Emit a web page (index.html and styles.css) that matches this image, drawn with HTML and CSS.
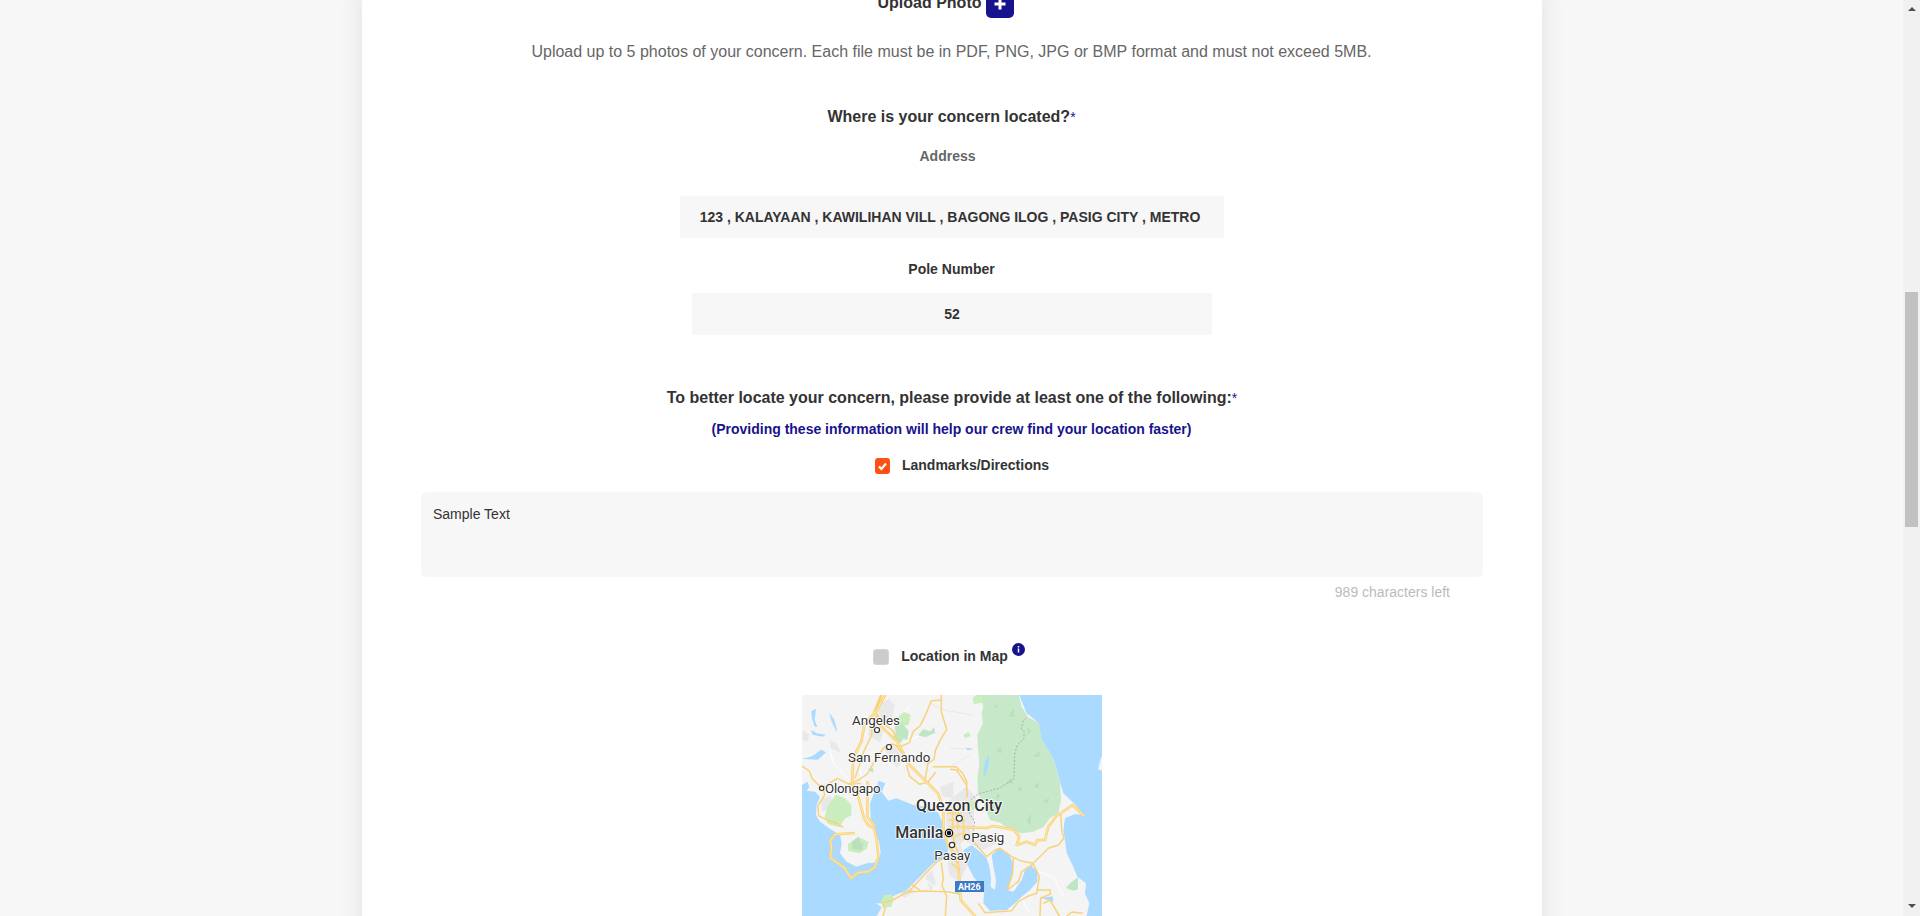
FILE: index.html
```html
<!DOCTYPE html>
<html lang="en">
<head>
<meta charset="utf-8">
<title>Report a Concern</title>
<link rel="stylesheet" href="styles.css">
</head>
<body>
<div class="page">
  <main class="card">
    <div class="upload"><span class="upload-label">Upload Photo</span><button class="add" aria-label="Add photo"><svg width="28" height="28" viewBox="0 0 28 28"><path d="M14 8.5v11M8.5 14h11" stroke="#fff" stroke-width="3" fill="none"/></svg></button></div>
    <p class="hint">Upload up to 5 photos of your concern. Each file must be in PDF, PNG, JPG or BMP format and must not exceed 5MB.</p>
    <h2 class="question where">Where is your concern located?<span class="req">*</span></h2>
    <div class="label address-label">Address</div>
    <div class="field address">123 , KALAYAAN , KAWILIHAN VILL , BAGONG ILOG , PASIG CITY , METRO</div>
    <div class="label pole-label">Pole Number</div>
    <div class="field pole">52</div>
    <h2 class="question better">To better locate your concern, please provide at least one of the following:<span class="req">*</span></h2>
    <div class="label note">(Providing these information will help our crew find your location faster)</div>
    <div class="option landmarks"><span class="box on"><svg width="15" height="16" viewBox="0 0 15 16"><path d="M4 8.4l2.4 2.5 4.6-5.4" stroke="#fff" stroke-width="2.2" fill="none"/></svg></span><span class="label">Landmarks/Directions</span></div>
    <div class="textarea">Sample Text</div>
    <div class="count">989 characters left</div>
    <div class="option location"><span class="box"></span><span class="label">Location in Map</span><span class="info"><svg width="13" height="13" viewBox="0 0 13 13"><circle cx="6.5" cy="6.5" r="6.5" fill="#17138c"/><path d="M6.5 3v1.6M6.5 5.4v4.2" stroke="#fff" stroke-width="1.5" fill="none"/></svg></span></div>
    <svg class="map" width="300" height="221" viewBox="6 15 900 663">
      <rect x="6" y="15" width="900" height="663" fill="#f4f4f4"/>
      <!-- terrain shading -->
      <g fill="#e8e8e8">
        <path d="M230 50l36-24 18 20-10 42-30 0zM210 100l40 20-10 38-36-22zM250 175l34-6 28 40-22 24zM90 150l20 10 12 28-30-14zM8 120l20 14-6 22-16-8zM420 290l40-14v50l-34-8zM438 340l60-50 30 30-10 90-40 60-38-30zM440 490l42-24 20 60-24 50-30-20zM376 560l20-20 12 40-18 24zM290 600l34-16 20 20-30 20z"/>
        <path d="M62 330l30-14 10 30-36 20zM500 420l50 10 40 30-40 20-50-24z"/>
      </g>
      <!-- minor roads -->
      <g fill="none" stroke="#fff" stroke-width="3">
        <path d="M90 180l10 40 50 52M180 240l20 60M260 120l70-70M310 160l60-30M330 410l20-40M380 570l30 30 50 14M640 580l50 90M700 540l60 20 30 60"/>
      </g>
      <path d="M392 40l40 20 90 16M352 202l28 22M450 176h60M450 230l60-35" fill="none" stroke="#e4e4e4" stroke-width="2"/>
      <!-- sea, bays and lake -->
      <g fill="#aadaff">
        <path d="M6 285L22 275L28 290L20 302L45 305L60 320L50 345L48 375L60 395L95 420L120 435L125 460L120 490L140 515L170 530L200 520L232 517L242 490L238 460L225 420L212 385L210 340L222 310L230 292L236 272L256 280L245 305L265 332L290 325L340 345L380 350L415 368L428 400L432 440L445 480L440 505L400 520L370 550L320 600L272 622L248 640L228 640L245 652L230 678H6z"/>
        <path d="M658 15L680 70L712 95L725 150L750 190L765 220L778 270L790 310L822 340L852 375L825 372L795 385L790 420L795 450L800 490L820 530L832 560L858 580L855 610L868 640L860 678H906V242L894 238L904 200H906V15z"/>
        <path d="M490 480L515 465L540 485L560 505L568 530L573 565L572 590L585 600L588 570L580 530L575 495L595 475L625 490L640 520L635 560L622 600L640 605L665 570L675 540L695 528L712 545L712 575L690 600L665 620L645 640L620 660L570 662L550 640L553 600L520 560L500 520z"/>
        <path d="M34 64l14-8-4 34 8 20-8 0-8-24zM6 207l30-8 28-20 14 8-24 22zM34 120l16 10 28 4-10 6-30-6zM88 68l14 20 10 34-4 0-14-30zM555 210l10-14 0 34-10 28-4-10zM498 173l24 4-20 4zM724 624l34-5 2 16-16-4z"/>
      </g>
      <!-- forests and parks -->
      <path d="M542 15H656L665 50L685 82L718 100L725 150L750 190L765 220L780 280L783 330L775 370L750 385L730 412L700 425L665 430L635 422L600 398L570 390L562 370L550 340L534 310L532 270L538 220L534 170L532 135L549 100L545 70L550 50z" fill="#c8e8ca"/>
      <path d="M556 212l10-18 0 34-12 30-4-6z" fill="#aadaff"/>
      <g fill="#caedbd">
        <path d="M82 348l26-34 26 10 20 20 0 32-20 10-16 26-34-10-10-20zM144 462l30-22 32 16-6 20-22 14-34-8zM290 84l22-18 20 8-6 32-30 2zM518 24l12-10 16 2v22l-24 4zM490 134l16-8 6 12-16 6zM252 616l20-4 10 12-8 26-22 4-10-18zM504 342l20-12 2 26-18 4z"/>
      </g>
      <g fill="#bfe6c4">
        <path d="M284 110l22-10 20 22-4 28-34-12zM354 136l16-18 22 6 10-14 4 18-30 14zM204 236l16-2 0 14-12-6zM798 594l12-14 24-18v36l-14 4zM280 136l30 10-8 12-26-10zM464 608l18-10 0 20z"/>
      </g>
      <g fill="#b9dfbd">
        <path d="M626 80l14-26 4 26zM682 110l12 14-10 10zM700 290l16-14 0 20zM680 394l12-24 0 38zM620 280l12-18 10 20zM560 362l20-14 4 16zM592 310l12 8-16 10zM728 334l20-10-4 16zM590 180l16-8-4 20zM700 200l18-16 0 16zM650 300l14-12 2 14zM581 50l8-8 2 14zM156 456l20-14 6 16 10 2-8 22-26-6z"/>
      </g>
      <!-- boundary -->
      <path d="M678 84l-8 8-6 24 8 8 0 22-20 18-8 30-2 72-42 28-66 18-20 16-10 20 6 26 14 20-6 36 4 30" fill="none" stroke="#a8a8a8" stroke-width="2.8" stroke-dasharray="6 5"/>
      <!-- highways: darker casing below lighter centre -->
      <g fill="none" stroke-linejoin="round">
        <g stroke="#f8d27c" stroke-width="4.5">
          <path d="M6 228l22 15 9 24 25 24 14-4 36-22 36 18 34-3M70 295l4 20-20 32 2 30 26 14 28 8 20 14"/>
          <path d="M424 30l-30 2-20 48-14 28-20 16-12 34-26 12-26-8-24 10-26 38-24 42-30 20-26 10"/>
          <path d="M424 15l0 51 16 52-20 34-14 30-4 26-18 12-10 54"/>
          <path d="M215 115l0 20-24 50-16 50-10 30M225 64l30 42 22 14 14 24M286 165l30 36 12 18"/>
          <path d="M319 225l10 34 30 24 24-6 24-30M398 230h70l20 20 12 24 0 30M450 238l20 2 30 46 2 36"/>
          <path d="M249 678l6-20-8-20 32-8 50-28 46-50 38-38 20-14M310 607l60-4 70 2 34 6M330 580l34 24"/>
          <path d="M424 518l6 48-4 20 14 32-4 60M454 420l10 40 14 40"/>
          <path d="M520 455L560 500L585 480L600 475L635 500L660 512L700 520L745 475L775 465L792 445L785 420L782 372"/>
          <path d="M640 505L638 550L622 600L655 575L665 545L700 522L718 560L710 610L685 618L655 635L635 662L555 668L535 640"/>
          <path d="M710 600l40 0 2 12-30 12-2 54M730 640l20-10 28 48M800 678l16-12 32 4"/>
        </g>
        <g stroke="#f8d078" stroke-width="8">
          <path d="M256 15l-28 50-34 36-10 54-24 48-4 76 20 44 16 62 12 20 18 10 8 32 5 54-10 30-20 14-30 2-22 18-20-32-42-30 4-26-4-26 14-18 60-4"/>
          <path d="M222 62l18 44 56 54 30 62 54 54 34 34 16 46 0 60 14 50 26 32 6 40 6 92 44 50 14 38"/>
          <path d="M490 412L560 414L580 408L640 418L658 440L650 465L680 455L705 465L712 450L735 450L745 410L770 378L818 345L852 378"/>
          <path d="M244 15l-20 50M202 274l0 106 22 28"/>
        </g>
        <g stroke="#ffe69b" stroke-width="3.5">
          <path d="M256 15l-28 50-34 36-10 54-24 48-4 76 20 44 16 62 12 20 18 10 8 32 5 54-10 30-20 14-30 2-22 18-20-32-42-30 4-26-4-26 14-18 60-4"/>
          <path d="M222 62l18 44 56 54 30 62 54 54 34 34 16 46 0 60 14 50 26 32 6 40 6 92 44 50 14 38"/>
          <path d="M490 412L560 414L580 408L640 418L658 440L650 465L680 455L705 465L712 450L735 450L745 410L770 378L818 345L852 378"/>
          <path d="M202 274l0 106 22 28"/>
        </g>
        <path d="M440 370h44M446 390h50M450 410h46M458 360v60M474 364v56M490 390v60M462 440l34-14M450 500l26 20M454 520l26 20" stroke="#fbd77f" stroke-width="5"/>
      </g>
      <!-- cities -->
      <g fill="#fff" stroke="#333" stroke-width="3.6">
        <circle cx="231" cy="120" r="7.5"/><circle cx="267" cy="171" r="7.5"/><circle cx="65" cy="295" r="6.5"/><circle cx="478" cy="385" r="9"/><circle cx="456" cy="465" r="8"/><circle cx="501" cy="441" r="7.5"/>
        <circle cx="447" cy="429" r="11" stroke="#111"/><circle cx="447" cy="429" r="5" fill="#111" stroke="#111"/>
      </g>
      <g class="town">
        <text x="156" y="105" textLength="144">Angeles</text>
        <text x="144" y="216" textLength="247">San Fernando</text>
        <text x="75" y="308" textLength="167">Olongapo</text>
        <text x="514" y="455" textLength="99">Pasig</text>
        <text x="403" y="510" textLength="108">Pasay</text>
      </g>
      <g class="city">
        <text x="348" y="364" textLength="258">Quezon City</text>
        <text x="286" y="444" textLength="144">Manila</text>
      </g>
      <rect x="465" y="573" width="87" height="33" fill="#3c79c5"/>
      <text class="shield" x="474" y="600" textLength="68">AH26</text>
    </svg>
  </main>
</div>
<div class="scrollbar"><span class="arrow up"></span><span class="thumb"></span><span class="arrow down"></span></div>
</body>
</html>
```
FILE: styles.css
```css
* { box-sizing: border-box; }
body {
  margin: 0;
  height: 916px;
  display: flex;
  overflow: hidden;
  background: #f7f7f7;
  font-family: "Liberation Sans", Arial, sans-serif;
  font-size: 14px;
  line-height: 20px;
  color: #333;
}
.page { flex: 1; height: 916px; display: flex; justify-content: center; overflow: hidden; }
.card {
  width: 1180px;
  height: 960px;
  margin-left: 1px;
  margin-top: -10px;
  flex: none;
  display: flex;
  flex-direction: column;
  align-items: center;
  background: #fff;
  box-shadow: 0 0 25px rgba(0, 0, 0, .09);
}
.upload { display: flex; height: 28px; gap: 5px; margin-right: 12px; font-size: 16px; font-weight: bold; line-height: 24px; }
.upload-label { margin-top: 1px; }
.add { width: 28px; height: 28px; padding: 0; border: 0; border-radius: 5px; background: #17138c; }
.add svg { display: block; }
.hint { margin: 22px 1px 0 0; font-size: 16px; line-height: 24px; color: #666; }
.question { margin: 0; font-size: 16px; line-height: 24px; font-weight: bold; }
.req { font-size: 14px; font-weight: normal; color: #17138c; }
.where { margin-top: 41px; margin-right: 1px; }
.better { margin-top: 51px; }
.label { font-weight: bold; }
.address-label { margin-top: 17px; margin-right: 9px; color: #666; }
.pole-label { margin-top: 21px; margin-right: 1px; }
.note { margin-top: 9px; margin-right: 1px; color: #17138c; }
.field {
  height: 42px;
  background: #f7f7f7;
  font-weight: bold;
  line-height: 42px;
  text-align: center;
  white-space: nowrap;
}
.address { width: 544px; margin-top: 30px; padding-right: 4px; }
.pole { width: 520px; margin-top: 14px; }
.option { display: flex; height: 20px; }
.landmarks { margin-top: 16px; padding-left: 20px; }
.location { margin-top: 44px; margin-right: 6px; }
.box { width: 16px; height: 16px; margin: 3px 12px 0 0; border: 1px solid #d3d6e0; border-radius: 3px; background: #ccc; }
.box.on { width: 15px; border: 0; background: #fe5115; }
.box svg { display: block; }
.info { margin: -3px 0 0 4px; }
.info svg { display: block; }
.textarea { width: 1062px; height: 85px; margin-top: 17px; padding: 12px 11px 12px 12px; border-radius: 5px; background: #f7f7f7; }
.count { align-self: flex-end; margin: 5px 92px 0 0; color: #bbb; }
.map { display: block; flex: none; margin-top: 29px; overflow: hidden; }
.town, .city { fill: #333; stroke: #fff; stroke-width: 5px; stroke-linejoin: round; paint-order: stroke; font-family: Roboto, sans-serif; }
.town { font-size: 40px; }
.city { font-size: 48px; font-weight: 500; }
.shield { fill: #fff; font: bold 27px Roboto, sans-serif; }
.scrollbar { width: 17px; height: 916px; display: flex; flex-direction: column; align-items: center; background: #f1f1f1; }
.arrow { border: 4px solid transparent; border-top: 0; border-bottom: 0; }
.up { margin-top: 7px; border-bottom: 4px solid #505050; }
.thumb { width: 13px; height: 235px; margin-top: 281px; background: #c1c1c1; }
.down { margin-top: auto; margin-bottom: 8px; border-top: 4px solid #505050; }
```
